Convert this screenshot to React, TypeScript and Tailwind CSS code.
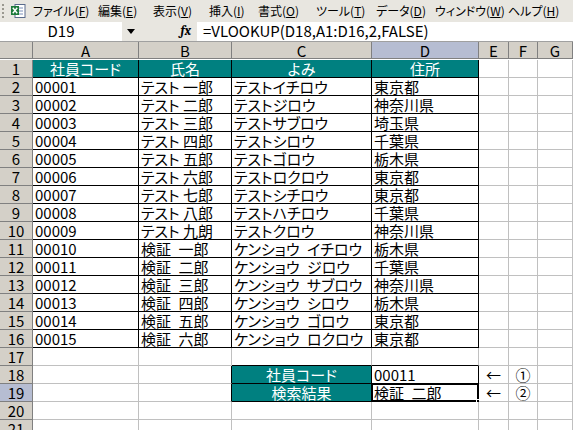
import React from "react";

const FONT = { fontFamily: '"Noto Sans CJK JP", "Noto Sans", sans-serif' };

const COLS = ["A", "B", "C", "D", "E", "F", "G"];

// \u2002 = en space: the 検証 rows have a wider gap than the テスト rows
const DATA: string[][] = [
  ["社員コード", "氏名", "よみ", "住所"],
  ["00001", "テスト 一郎", "テストイチロウ", "東京都"],
  ["00002", "テスト 二郎", "テストジロウ", "神奈川県"],
  ["00003", "テスト 三郎", "テストサブロウ", "埼玉県"],
  ["00004", "テスト 四郎", "テストシロウ", "千葉県"],
  ["00005", "テスト 五郎", "テストゴロウ", "栃木県"],
  ["00006", "テスト 六郎", "テストロクロウ", "東京都"],
  ["00007", "テスト 七郎", "テストシチロウ", "東京都"],
  ["00008", "テスト 八郎", "テストハチロウ", "千葉県"],
  ["00009", "テスト 九朗", "テストクロウ", "神奈川県"],
  ["00010", "検証\u2002一郎", "ケンショウ\u2002イチロウ", "栃木県"],
  ["00011", "検証\u2002二郎", "ケンショウ\u2002ジロウ", "千葉県"],
  ["00012", "検証\u2002三郎", "ケンショウ\u2002サブロウ", "神奈川県"],
  ["00013", "検証\u2002四郎", "ケンショウ\u2002シロウ", "栃木県"],
  ["00014", "検証\u2002五郎", "ケンショウ\u2002ゴロウ", "東京都"],
  ["00015", "検証\u2002六郎", "ケンショウ\u2002ロクロウ", "東京都"],
];

// label, access key, slot width
const MENU: [string, string, string][] = [
  ["ファイル", "F", "w-[65px]"],
  ["編集", "E", "w-[55px]"],
  ["表示", "V", "w-[56px]"],
  ["挿入", "I", "w-[49px]"],
  ["書式", "O", "w-[58px]"],
  ["ツール", "T", "w-[60px]"],
  ["データ", "D", "w-[59px]"],
  ["ウィンドウ", "W", "w-[73px]"],
  ["ヘルプ", "H", "w-[60px]"],
];

// row/col are 1-based sheet coordinates, col 1 = A
function inBox(row: number, col: number) {
  if (row >= 1 && row <= 16 && col >= 1 && col <= 4) return true;
  if (row >= 18 && row <= 19 && col >= 3 && col <= 4) return true;
  return false;
}

function cellContent(row: number, col: number): { text: string; teal?: boolean; center?: boolean } {
  if (row >= 1 && row <= 16 && col <= 4) {
    return { text: DATA[row - 1][col - 1], teal: row === 1, center: row === 1 };
  }
  if (row === 18 && col === 3) return { text: "社員コード", teal: true, center: true };
  if (row === 19 && col === 3) return { text: "検索結果", teal: true, center: true };
  if (row === 18 && col === 4) return { text: "00011" };
  if (row === 19 && col === 4) return { text: "検証\u2002二郎" };
  if ((row === 18 || row === 19) && col === 5) return { text: "←", center: true };
  if (row === 18 && col === 6) return { text: "①", center: true };
  if (row === 19 && col === 6) return { text: "②", center: true };
  return { text: "" };
}

function ExcelIcon() {
  return (
    <svg width="16" height="16" viewBox="0 0 16 16">
      <rect x="5" y="1.5" width="10" height="13" fill="#fff" stroke="#5a6b8c" />
      <line x1="7" y1="5" x2="13" y2="5" stroke="#7b8fb8" />
      <line x1="7" y1="8" x2="13" y2="8" stroke="#7b8fb8" />
      <line x1="7" y1="11" x2="13" y2="11" stroke="#7b8fb8" />
      <rect x="1" y="3" width="8" height="9" fill="#1d7a3a" />
      <path d="M2.8 4.8 L7.2 10.2 M7.2 4.8 L2.8 10.2" stroke="#fff" strokeWidth="1.4" />
    </svg>
  );
}

function MenuBar() {
  return (
    <div className="flex h-[21px] items-center bg-[#e8e6e0] text-[12px] text-black">
      <div className="ml-[2px] flex h-[14px] w-[3px] flex-col justify-between">
        {[0, 1, 2, 3].map((i) => (
          <span key={i} className="block h-[2px] w-[2px] bg-[#9a9890]" />
        ))}
      </div>
      <div className="ml-[5px] mr-[7px]">
        <ExcelIcon />
      </div>
      <div className="flex">
        {MENU.map(([label, key, w]) => (
          <span key={key} className={"whitespace-nowrap " + w}>
            {label}(<span className="underline">{key}</span>)
          </span>
        ))}
      </div>
    </div>
  );
}

function FormulaBar() {
  return (
    <div className="flex h-[21px] items-center border-b border-[#a0a0a0] bg-[#e8e6e0] text-[15px]">
      <div className="flex h-[19px] w-[122px] items-center justify-center bg-white">D19</div>
      <div className="flex w-[18px] justify-center">
        <svg width="8" height="5" viewBox="0 0 8 5">
          <path d="M0 0 H8 L4 5 Z" fill="#000" />
        </svg>
      </div>
      <div className="flex w-[57px] justify-end pr-[6px] font-serif text-[13px] font-bold italic">
        fx
      </div>
      <div className="flex h-[19px] flex-1 items-center bg-white pl-[6px]">
        =VLOOKUP(D18,A1:D16,2,FALSE)
      </div>
    </div>
  );
}

function Sheet() {
  const rows = Array.from({ length: 21 }, (_, i) => i + 1);
  return (
    <div className="grid grid-cols-[33px_106px_93px_140px_107px_30px_29px_1fr] auto-rows-[18px] text-[15px] leading-none">
      <div className="h-[17px] border-r border-b border-[#808080] bg-[#d4d0c8]" />
      {COLS.map((c) => (
        <div
          key={c}
          className={
            "flex h-[17px] items-center justify-center border-r border-b border-[#808080] " +
            (c === "D" ? "bg-[#b6bdd2]" : "bg-[#d4d0c8]")
          }
        >
          {c}
        </div>
      ))}
      {rows.map((r) => (
        <React.Fragment key={r}>
          <div
            className={
              "flex items-center justify-center border-r border-b border-[#808080] " +
              (r === 19 ? "bg-[#b6bdd2]" : "bg-[#d4d0c8]")
            }
          >
            {r}
          </div>
          {COLS.map((_, ci) => {
            const col = ci + 1;
            const cell = cellContent(r, col);
            const rightBlack = inBox(r, col) || inBox(r, col + 1);
            const bottomBlack = inBox(r, col) || inBox(r + 1, col);
            const selected = r === 19 && col === 4;
            return (
              <div
                key={col}
                className={
                  "relative flex items-center whitespace-nowrap border-r border-b " +
                  (rightBlack ? "border-r-black " : "border-r-[#c0c0c0] ") +
                  (bottomBlack ? "border-b-black " : "border-b-[#c0c0c0] ") +
                  (cell.teal ? "bg-[#008080] text-white " : "bg-white text-black ") +
                  (cell.center ? "justify-center" : "pl-[2px]")
                }
              >
                {cell.text}
                {selected && (
                  <>
                    <div className="pointer-events-none absolute -top-px -left-px -right-px -bottom-px border-2 border-black" />
                    <div className="absolute -right-[4px] -bottom-[4px] h-[6px] w-[6px] border border-white bg-black" />
                  </>
                )}
              </div>
            );
          })}
        </React.Fragment>
      ))}
    </div>
  );
}

export default function App() {
  return (
    <div
      className="h-[430px] w-[573px] overflow-hidden bg-white text-black [font-feature-settings:'palt']"
      style={FONT}
    >
      <MenuBar />
      <FormulaBar />
      <Sheet />
    </div>
  );
}
